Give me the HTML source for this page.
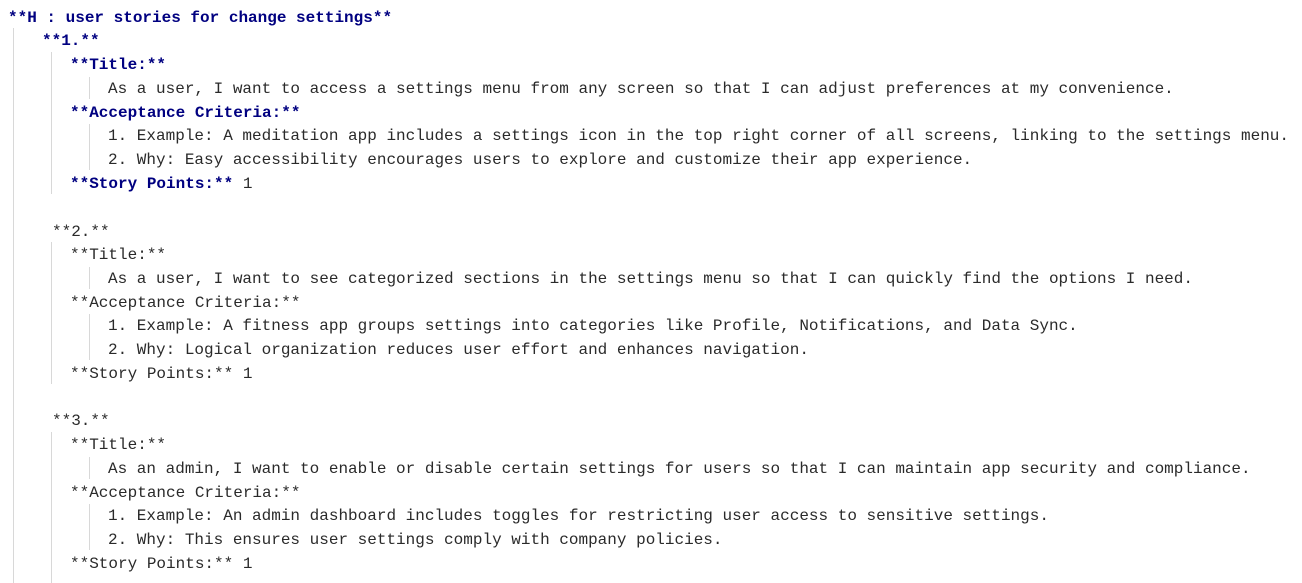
<!DOCTYPE html>
<html><head><meta charset="utf-8"><style>
body{margin:0;background:#fff;width:1302px;height:583px;overflow:hidden;position:relative;font-family:"Liberation Mono",monospace;font-size:16px;}
.l{position:absolute;white-space:pre;line-height:24px;color:#2a2a2a;}
.b{color:#000080;font-weight:bold;}
.v{position:absolute;width:1px;background:#d8d8d8;}
</style></head><body>
<div class="v" style="left:13px;top:28px;height:555px"></div>
<div class="v" style="left:51px;top:52px;height:142px"></div>
<div class="v" style="left:51px;top:242px;height:142px"></div>
<div class="v" style="left:51px;top:432px;height:151px"></div>
<div class="v" style="left:89px;top:77px;height:22px"></div>
<div class="v" style="left:89px;top:124px;height:46px"></div>
<div class="v" style="left:89px;top:267px;height:22px"></div>
<div class="v" style="left:89px;top:314px;height:46px"></div>
<div class="v" style="left:89px;top:457px;height:22px"></div>
<div class="v" style="left:89px;top:504px;height:46px"></div>

<div class="l b" style="left:8px;top:6px">**H : user stories for change settings**</div>
<div class="l b" style="left:42px;top:29px">**1.**</div>
<div class="l b" style="left:70px;top:53px">**Title:**</div>
<div class="l" style="left:108px;top:77px">As a user, I want to access a settings menu from any screen so that I can adjust preferences at my convenience.</div>
<div class="l b" style="left:70px;top:101px">**Acceptance Criteria:**</div>
<div class="l" style="left:108px;top:124px">1. Example: A meditation app includes a settings icon in the top right corner of all screens, linking to the settings menu.</div>
<div class="l" style="left:108px;top:148px">2. Why: Easy accessibility encourages users to explore and customize their app experience.</div>
<div class="l" style="left:70px;top:172px"><span class="b">**Story Points:**</span> 1</div>

<div class="l" style="left:52px;top:220px">**2.**</div>
<div class="l" style="left:70px;top:243px">**Title:**</div>
<div class="l" style="left:108px;top:267px">As a user, I want to see categorized sections in the settings menu so that I can quickly find the options I need.</div>
<div class="l" style="left:70px;top:291px">**Acceptance Criteria:**</div>
<div class="l" style="left:108px;top:314px">1. Example: A fitness app groups settings into categories like Profile, Notifications, and Data Sync.</div>
<div class="l" style="left:108px;top:338px">2. Why: Logical organization reduces user effort and enhances navigation.</div>
<div class="l" style="left:70px;top:362px">**Story Points:** 1</div>

<div class="l" style="left:52px;top:409px">**3.**</div>
<div class="l" style="left:70px;top:433px">**Title:**</div>
<div class="l" style="left:108px;top:457px">As an admin, I want to enable or disable certain settings for users so that I can maintain app security and compliance.</div>
<div class="l" style="left:70px;top:481px">**Acceptance Criteria:**</div>
<div class="l" style="left:108px;top:504px">1. Example: An admin dashboard includes toggles for restricting user access to sensitive settings.</div>
<div class="l" style="left:108px;top:528px">2. Why: This ensures user settings comply with company policies.</div>
<div class="l" style="left:70px;top:552px">**Story Points:** 1</div>
</body></html>
